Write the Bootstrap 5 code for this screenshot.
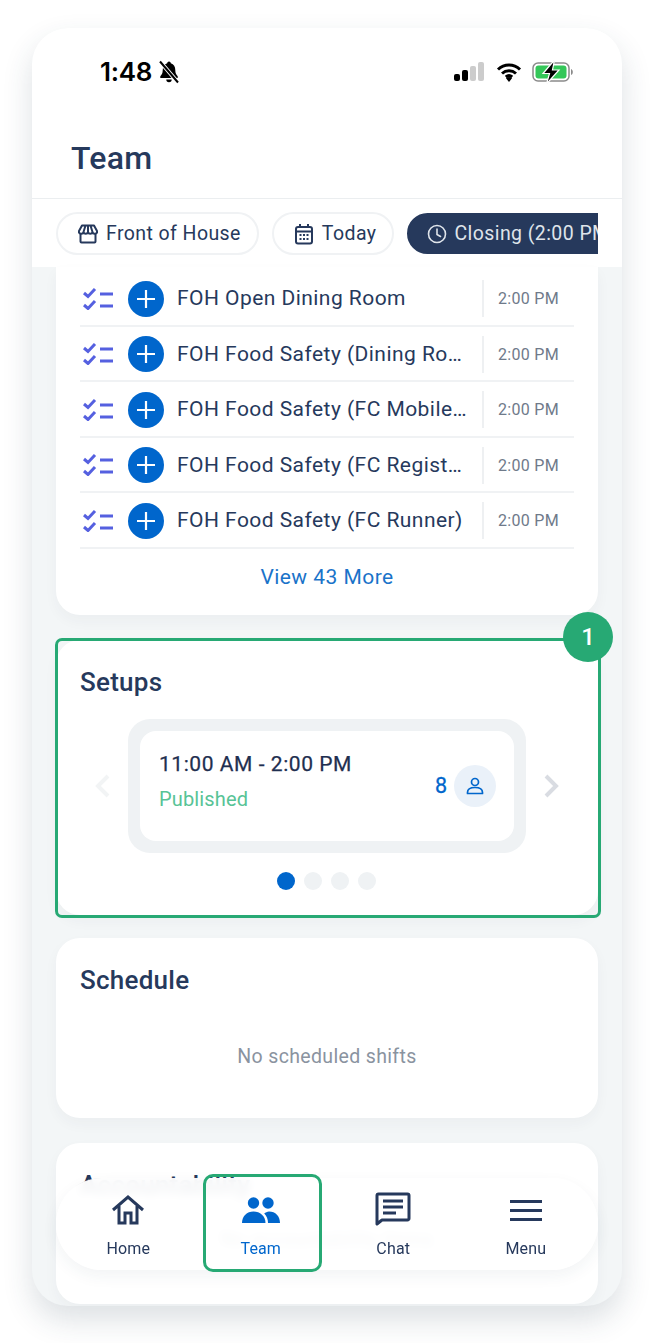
<!DOCTYPE html>
<html lang="en">
<head>
  <meta charset="UTF-8">
  <meta name="viewport" content="width=device-width, initial-scale=1.0">
  <title>Team</title>
  <link href="https://cdn.jsdelivr.net/npm/bootstrap@5.3.0/dist/css/bootstrap.min.css" rel="stylesheet">
  <style>
    body { background: #fff; font-family: Roboto, "Liberation Sans", sans-serif; color: #1f2f50; padding: 28px 32px 0; min-height: 1343px; }
    .phone { width: 590px; height: 1278px; border-radius: 36px; background: #f3f6f7; overflow: hidden; position: relative; box-shadow: 0 14px 30px rgba(40, 60, 80, .16); }
    .top-head { height: 171px; background: #fff; border-bottom: 1px solid #ebeef0; }
    .status-row { height: 88px; padding: 0 49px 0 68px; padding-top: 27px; }
    .clock-text { font-family: Inter, sans-serif; font-weight: 600; font-size: 26px; line-height: 34px; color: #000; letter-spacing: -.3px; }
    .page-title { font-size: 32px; font-weight: 500; letter-spacing: .25px; color: #26395c; margin: 23px 0 0 39px; line-height: 38px; }
    .filter-bar { height: 68px; background: #fff; padding: 13px 24px 0; }
    .chip-scroll { overflow: hidden; gap: 13px; }
    .chip { height: 43px; flex-shrink: 0; border: 2px solid #f0f2f4; border-radius: 22px; padding: 0 16px 0 20px; font-size: 19.5px; letter-spacing: .42px; color: #26395c; gap: 8px; white-space: nowrap; }
    .chip-on { background: #26395c; border-color: #26395c; color: #dfe4ea; height: 41px; margin-top: 1px; padding-left: 18px; gap: 7px; }
    .content-col { padding: 0 24px; }
    .white-box { background: #fff; border: 0; border-radius: 24px; box-shadow: 0 6px 14px rgba(40, 60, 80, .04); }
    .task-box { border-radius: 0 0 24px 24px; height: 348px; padding: 4px 24px 0; }
    .task-row { height: 55.5px; border-bottom: 2px solid #f0f2f4; padding: 2px 0 0 3px; }
    .plus-dot { width: 36px; height: 36px; border-radius: 50%; background: #0066cc; margin-left: 15px; flex-shrink: 0; }
    .task-name { font-size: 21px; letter-spacing: .45px; color: #26395c; margin-left: 13px; width: 291px; flex-shrink: 0; white-space: nowrap; overflow: hidden; text-overflow: ellipsis; }
    .task-time { border-left: 2px solid #eef0f2; height: 37px; margin-left: 14px; padding-left: 14px; font-size: 16px; letter-spacing: .3px; color: #6f7a8a; white-space: nowrap; line-height: 37px; }
    .more-link { color: #1a73c9; font-size: 21px; letter-spacing: .45px; line-height: 24px; margin-top: 16px; }
    .setups-box { height: 275px; margin-top: 25px; padding: 23px 24px 24px; position: relative; }
    .setups-ring { position: absolute; inset: -2px -3px -3px -1px; border: 3px solid #27a974; border-radius: 7px; pointer-events: none; }
    .count-badge { position: absolute; top: -28px; right: -15px; width: 50px; height: 50px; border-radius: 50%; background: #27a974; color: #fff; font-size: 24px; font-weight: 500; }
    .box-title { font-size: 26px; font-weight: 500; letter-spacing: .25px; line-height: 38px; color: #26395c; margin: 0; }
    .slide-wrap { height: 134px; margin-top: 18px; }
    .slide-grey { width: 398px; height: 134px; background: #eff2f4; border-radius: 22px; padding: 12px; margin: 0 17px; }
    .slide-card { height: 110px; background: #fff; border-radius: 16px; padding: 0 18px 0 19px; }
    .slide-text { padding-bottom: 9px; }
    .slide-time { font-size: 21px; letter-spacing: .55px; line-height: 26px; color: #1f2f50; -webkit-text-stroke: .25px #1f2f50; }
    .slide-state { font-size: 20px; letter-spacing: .15px; color: #57c396; line-height: 26px; margin-top: 9px; }
    .slide-num { font-size: 21.5px; color: #0066cc; -webkit-text-stroke: .3px #0066cc; }
    .person-dot { width: 42px; height: 42px; border-radius: 50%; background: #eaf1f9; margin-left: 7px; }
    .pager { gap: 9px; margin-top: 19px; padding-right: 2px; }
    .pager-dot { width: 18px; height: 18px; border-radius: 50%; background: #eff2f4; }
    .pager-on { background: #0066cc; }
    .sched-box { height: 180px; margin-top: 23px; padding: 23px 24px 24px; }
    .empty-text { font-size: 19.5px; letter-spacing: .35px; color: #8a93a0; margin-top: 46px; line-height: 24px; }
    .empty-faint { margin-top: 24px; }
    .acct-box { height: 161px; margin-top: 25px; padding: 23px 24px 24px; }
    .batt-gap { margin-left: 2px; }
    .bottom-nav { position: absolute; left: 24px; bottom: 36px; width: 542px; height: 92px; padding: 0 6px; background: rgba(255, 255, 255, .93); backdrop-filter: blur(5px); border-radius: 46px; box-shadow: 0 6px 16px rgba(40, 60, 80, .06); }
    .nav-slot { width: 132.5px; position: relative; padding-top: 14px; color: #26395c; font-size: 16px; letter-spacing: .15px; }
    .nav-icon { height: 42px; }
    .nav-label { line-height: 20px; margin-top: 5px; }
    .slot-on { color: #0066cc; }
    .slot-ring { position: absolute; left: 8px; top: -4px; width: 119px; height: 98px; border: 3px solid #27a974; border-radius: 10px; }
  </style>
</head>
<body>
  <div class="phone">
    <div class="top-head">
      <div class="status-row d-flex justify-content-between align-items-start">
        <div class="d-flex align-items-center" style="gap:6px">
          <span class="clock-text">1:48</span>
          <svg width="22" height="24" viewBox="0 0 22 24"><path d="M11 1.500a1.800 1.800 0 0 1 1.800 1.800c3 .9 4.500 3.600 4.500 7 0 2.900.9 4.500 2.400 6v1.700H2.300v-1.700c1.500-1.500 2.400-3.100 2.400-6 0-3.400 1.500-6.100 4.500-7A1.800 1.800 0 0 1 11 1.500zM8.300 19.500h5.400a2.700 2.700 0 0 1-5.400 0z" fill="#000"/><path d="M2 1.500l18 21" stroke="#fff" stroke-width="4"/><path d="M2 1.500l18 21" stroke="#000" stroke-width="2"/></svg>
        </div>
        <div class="d-flex align-items-center gap-2" style="height:34px">
          <svg width="30" height="20" viewBox="0 0 30 20"><rect x="0" y="12" width="6" height="7" rx="2" fill="#000"/><rect x="8" y="8" width="6" height="11" rx="2" fill="#000"/><rect x="16" y="4" width="6" height="15" rx="2" fill="#ccc"/><rect x="24" y="0" width="6" height="19" rx="2" fill="#ccc"/></svg>
          <svg class="ms-1" width="26" height="20" viewBox="0 0 26 20"><path d="M2 7.500a16 16 0 0 1 22 0M6 11.500a10.500 10.500 0 0 1 14 0M9.800 15a5 5 0 0 1 6.400 0" fill="none" stroke="#000" stroke-width="3"/><path d="M13 20l-3-3.800a5 5 0 0 1 6 0z" fill="#000"/></svg>
          <svg class="batt-gap" width="41" height="24" viewBox="0 0 41 24"><rect x="1" y="3" width="36" height="18" rx="5" fill="#fff" stroke="#8b8b8b" stroke-width="1.500"/><rect x="3.500" y="5.500" width="31" height="13" rx="3" fill="#34c759"/><path d="M39 9v6c1.300-.5 1.800-1.500 1.800-3s-.5-2.500-1.800-3z" fill="#8b8b8b"/><path d="M22.500 0L11 13.500h6.500L14.500 24 27 10h-6.500z" fill="#000" stroke="#fff" stroke-width="1.200"/></svg>
        </div>
      </div>
      <h1 class="page-title">Team</h1>
    </div>

    <div class="filter-bar">
      <div class="chip-scroll d-flex">
        <div class="chip d-flex align-items-center">
          <svg width="20" height="20" viewBox="0 0 20 20" fill="none" stroke="#26395c" stroke-width="2" stroke-linejoin="round"><path d="M2.500 9v8.500a1 1 0 0 0 1 1h13a1 1 0 0 0 1-1V9"/><path d="M4 1.500h12l3 5.500a2.300 2.300 0 0 1-4.500 1 2.300 2.300 0 0 1-4.500 0 2.300 2.300 0 0 1-4.500 0 2.300 2.300 0 0 1-4.500-1zM7.500 1.500L5.500 8M12.500 1.500l2 6.500M10 1.500V8"/></svg>
          Front of House
        </div>
        <div class="chip d-flex align-items-center">
          <svg width="20" height="22" viewBox="0 0 20 22" fill="none" stroke="#26395c" stroke-width="2"><rect x="2" y="4" width="16" height="16.500" rx="2"/><path d="M2 8.500h16M6 1v4M14 1v4"/><path d="M5.500 12h9M5.500 16h9" stroke-dasharray="2 1.500"/></svg>
          Today
        </div>
        <div class="chip chip-on d-flex align-items-center">
          <svg width="20" height="20" viewBox="0 0 20 20" fill="none" stroke="#dfe4ea" stroke-width="1.600" stroke-linecap="round"><circle cx="10" cy="10" r="8.500"/><path d="M10 5v5.500l3.500 2"/></svg>
          Closing (2:00 PM - 5:00 PM)
        </div>
      </div>
    </div>

    <div class="content-col">
      <div class="card white-box task-box">
        <div id="task-list"></div>
        <div class="more-link text-center">View 43 More</div>
      </div>

      <div class="card white-box setups-box">
        <div class="setups-ring"></div>
        <div class="count-badge d-flex align-items-center justify-content-center">1</div>
        <h2 class="box-title">Setups</h2>
        <div class="slide-wrap d-flex align-items-center justify-content-center">
          <svg width="16" height="26" viewBox="0 0 16 26" fill="none" stroke="#f2f4f5" stroke-width="4"><path d="M13 3L3 13l10 10"/></svg>
          <div class="slide-grey flex-shrink-0">
            <div class="slide-card d-flex justify-content-between align-items-center">
              <div class="slide-text">
                <div class="slide-time">11:00 AM - 2:00 PM</div>
                <div class="slide-state">Published</div>
              </div>
              <div class="d-flex align-items-center">
                <span class="slide-num">8</span>
                <span class="person-dot d-flex align-items-center justify-content-center">
                  <svg width="18" height="18" viewBox="0 0 18 18" fill="none" stroke="#0066cc" stroke-width="1.700"><circle cx="9" cy="5" r="3.500"/><path d="M1.500 15.500c0-3.500 3.500-5 7.500-5s7.500 1.500 7.500 5v1h-15z" stroke-linejoin="round"/></svg>
                </span>
              </div>
            </div>
          </div>
          <svg width="16" height="26" viewBox="0 0 16 26" fill="none" stroke="#d9dce2" stroke-width="4"><path d="M3 3l10 10L3 23"/></svg>
        </div>
        <div class="pager d-flex justify-content-center">
          <span class="pager-dot pager-on"></span><span class="pager-dot"></span><span class="pager-dot"></span><span class="pager-dot"></span>
        </div>
      </div>

      <div class="card white-box sched-box">
        <h2 class="box-title">Schedule</h2>
        <div class="empty-text text-center">No scheduled shifts</div>
      </div>

      <div class="card white-box acct-box">
        <h2 class="box-title">Accountability</h2>
        <div class="empty-text empty-faint text-center">No accountability items</div>
      </div>
    </div>

    <div class="bottom-nav d-flex">
      <div class="nav-slot text-center">
        <div class="nav-icon"><svg width="36" height="34" viewBox="0 0 36 34" fill="none" stroke="#26395c" stroke-width="3"><path d="M3 18L18 5l15 13M9 14v17h6V21h6v10h6V14"/></svg></div>
        <div class="nav-label">Home</div>
      </div>
      <div class="nav-slot slot-on text-center">
        <div class="slot-ring"></div>
        <div class="nav-icon"><svg width="40" height="34" viewBox="0 0 40 34" fill="#0066cc"><circle cx="12.500" cy="11" r="5.700"/><circle cx="27" cy="11" r="5.700"/><path d="M1 31c0-7 5-11.500 11.500-11.500S24.500 24 24.500 31z"/><path d="M27 31c0-4-1.300-7-3.800-9.500 1.300-1 3-2 4.800-2 6.500 0 11 4.500 11 11.500z"/></svg></div>
        <div class="nav-label">Team</div>
      </div>
      <div class="nav-slot text-center">
        <div class="nav-icon"><svg width="36" height="36" viewBox="0 0 36 36" fill="none" stroke="#26395c" stroke-width="3"><path d="M2 32V3.500A1.500 1.500 0 0 1 3.500 2h29A1.500 1.500 0 0 1 34 3.500v23a1.500 1.500 0 0 1-1.500 1.500H7z" stroke-linejoin="round"/><path d="M8 9h20M8 15h20M8 21h13"/></svg></div>
        <div class="nav-label">Chat</div>
      </div>
      <div class="nav-slot text-center">
        <div class="nav-icon"><svg width="34" height="34" viewBox="0 0 34 34" fill="none" stroke="#26395c" stroke-width="3"><path d="M1 9.500h32M1 18.500h32M1 27.500h32"/></svg></div>
        <div class="nav-label">Menu</div>
      </div>
    </div>
  </div>

  <script src="https://cdn.jsdelivr.net/npm/bootstrap@5.3.0/dist/js/bootstrap.bundle.min.js"></script>
  <script>
    // task rows
    var tarefas = [
      'FOH Open Dining Room',
      'FOH Food Safety (Dining Room)',
      'FOH Food Safety (FC Mobile Order)',
      'FOH Food Safety (FC Register)',
      'FOH Food Safety (FC Runner)'
    ];
    var list = document.getElementById('task-list');
    tarefas.forEach(function(t) {
      list.innerHTML += `<div class="task-row d-flex align-items-center">
        <svg class="flex-shrink-0" width="30" height="22" viewBox="0 0 30 22" fill="none" stroke="#5560e0" stroke-width="3"><path d="M1 5l4 3.500L12 1M1 17l4 3.500L12 13M17 6h13M17 18h13"/></svg>
        <span class="plus-dot d-flex align-items-center justify-content-center"><svg width="20" height="20" viewBox="0 0 20 20" stroke="#fff" stroke-width="2.200"><path d="M10 1v18M1 10h18"/></svg></span>
        <span class="task-name">${t}</span>
        <span class="task-time">2:00 PM</span>
      </div>`;
    });
  </script>
</body>
</html>
